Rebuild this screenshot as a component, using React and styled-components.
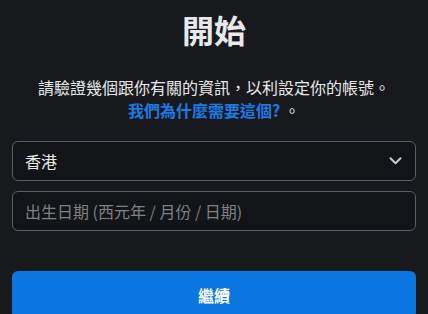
import styled, { createGlobalStyle } from "styled-components"

const GlobalStyle = createGlobalStyle`
  html, body {
    margin: 0;
    padding: 0;
    background: #18191c;
  }

  body {
    font-family: "Noto Sans CJK TC", "Noto Sans", sans-serif;
    color: #e4e6eb;
  }
`

export default function App() {
  return (
    <>
      <GlobalStyle />
      <Page>
        <Title>開始</Title>
        <Intro>
          請驗證幾個跟你有關的資訊，以利設定你的帳號。
          <br />
          <Link href="#">我們為什麼需要這個?</Link> 。
        </Intro>
        <Fields>
          <SelectBox>
            <FieldText>香港</FieldText>
            <Chevron viewBox="0 0 12 8" aria-hidden="true">
              <path d="M1 1.2l5 5 5-5" />
            </Chevron>
          </SelectBox>
          <InputBox>
            <FieldText $muted>出生日期 (西元年 / 月份 / 日期)</FieldText>
          </InputBox>
        </Fields>
        <Button>繼續</Button>
      </Page>
    </>
  )
}

const Page = styled.div`
  display: flex;
  flex-direction: column;
  padding: 9px 12px 0;
`

const Title = styled.h1`
  margin: 0;
  font-size: 32px;
  line-height: 40px;
  font-weight: 700;
  text-align: center;
  color: #e8e9ec;
`

const Intro = styled.p`
  margin: 27px 0 0;
  font-size: 16px;
  line-height: 23px;
  text-align: center;
  color: #e8e9ec;
`

const Link = styled.a`
  color: #1d7ae4;
  font-weight: 700;
  text-decoration: none;
`

const Fields = styled.div`
  display: flex;
  flex-direction: column;
  gap: 10px;
  margin-top: 19px;
`

const SelectBox = styled.div`
  display: flex;
  align-items: center;
  justify-content: space-between;
  height: 40px;
  box-sizing: border-box;
  padding: 0 13px 0 12px;
  border: 1px solid #5c5e63;
  border-radius: 6px;
  background: #131417;
`

const InputBox = styled(SelectBox)``

const FieldText = styled.span`
  font-size: 16px;
  color: ${p => (p.$muted ? "#7e8186" : "#e8e9ec")};
`

const Chevron = styled.svg`
  width: 13px;
  height: 8px;
  fill: none;
  stroke: #c8cacf;
  stroke-width: 2;
  stroke-linecap: round;
  stroke-linejoin: round;
`

const Button = styled.button`
  margin-top: 40px;
  height: 48px;
  border: none;
  border-radius: 6px;
  background: #0b76e0;
  color: #ffffff;
  font-family: inherit;
  font-size: 16px;
  font-weight: 700;
`
